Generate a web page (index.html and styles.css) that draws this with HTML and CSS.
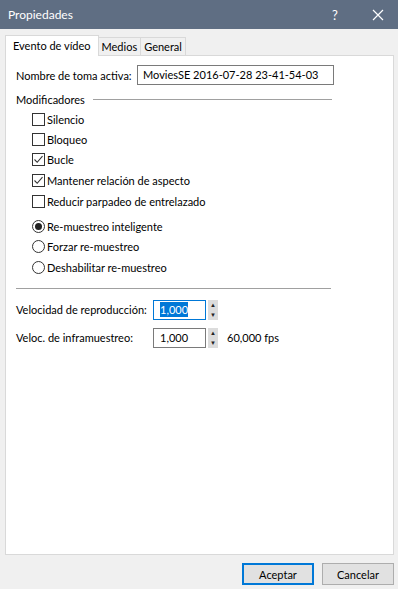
FILE: index.html
```html
<!DOCTYPE html>
<html lang="es">
<head>
  <meta charset="UTF-8">
  <title>Propiedades</title>
  <link rel="stylesheet" href="styles.css">
</head>
<body>
  <div class="titlebar">
    <span class="title">Propiedades</span>
    <span class="help">?</span>
    <span class="close">
      <svg width="12" height="12" viewBox="0 0 12 12"><path d="M1 1L11 11M11 1L1 11" stroke="#fff" stroke-width="1.2"/></svg>
    </span>
  </div>

  <div class="dialog">
    <div class="tabs">
      <div class="tab active">Evento de vídeo</div>
      <div class="tab">Medios</div>
      <div class="tab">General</div>
    </div>

    <div class="panel">
      <div class="row name-row">
        <label>Nombre de toma activa:</label>
        <div class="textbox">MoviesSE 2016-07-28 23-41-54-03</div>
      </div>

      <div class="group-title">
        <span>Modificadores</span>
        <div class="line"></div>
      </div>

      <div class="checks">
        <div class="check"><span class="box"></span>Silencio</div>
        <div class="check"><span class="box"></span>Bloqueo</div>
        <div class="check"><span class="box checked"><svg width="11" height="11" viewBox="0 0 11 11"><path d="M1.5 5.5L4.2 8.3L9.5 2.2" fill="none" stroke="#333" stroke-width="1.1"/></svg></span>Bucle</div>
        <div class="check"><span class="box checked"><svg width="11" height="11" viewBox="0 0 11 11"><path d="M1.5 5.5L4.2 8.3L9.5 2.2" fill="none" stroke="#333" stroke-width="1.1"/></svg></span>Mantener relación de aspecto</div>
        <div class="check"><span class="box"></span>Reducir parpadeo de entrelazado</div>
      </div>

      <div class="radios">
        <div class="radio"><span class="dot on"></span>Re-muestreo inteligente</div>
        <div class="radio"><span class="dot"></span>Forzar re-muestreo</div>
        <div class="radio"><span class="dot"></span>Deshabilitar re-muestreo</div>
      </div>

      <div class="sep"></div>

      <div class="row spin-row">
        <label class="spin-label">Velocidad de reproducción:</label>
        <div class="spinbox focused"><span class="sel">1,000</span></div>
        <div class="arrows"><span>&#9650;</span><span>&#9660;</span></div>
      </div>
      <div class="row spin-row">
        <label class="spin-label">Veloc. de inframuestreo:</label>
        <div class="spinbox">1,000</div>
        <div class="arrows"><span>&#9650;</span><span>&#9660;</span></div>
        <span class="fps">60,000 fps</span>
      </div>
    </div>

    <div class="buttons">
      <button class="btn default">Aceptar</button>
      <button class="btn">Cancelar</button>
    </div>
  </div>
</body>
</html>
```

FILE: styles.css
```css
* {
  margin: 0;
  padding: 0;
  box-sizing: border-box;
}

body {
  width: 398px;
  height: 589px;
  background: #f0f0f0;
  font-family: Lato, "Noto Sans", sans-serif;
  font-size: 11px;
  color: #000;
  overflow: hidden;
  white-space: nowrap;
}

.titlebar {
  height: 29px;
  background: #5f6e83;
  color: #fff;
  display: flex;
  align-items: center;
  padding-left: 8px;
}

.title {
  flex: 1;
  font-size: 12px;
}

.help {
  width: 46px;
  text-align: center;
  font-size: 13px;
}

.close {
  width: 40px;
  display: flex;
  justify-content: center;
}

.dialog {
  padding: 6px 4px 0 5px;
}

.tabs {
  display: flex;
  align-items: flex-end;
  height: 20px;
  position: relative;
  z-index: 1;
}

.tab {
  height: 18px;
  border: 1px solid #d9d9d9;
  border-bottom: none;
  background: #f0f0f0;
  padding: 0 3px;
  line-height: 17px;
  margin-left: -1px;
}

.tab:first-child {
  margin-left: 0;
}

.tab.active {
  height: 21px;
  background: #fff;
  padding: 0 7px;
  line-height: 19px;
  margin-bottom: -1px;
}

.panel {
  height: 500px;
  background: #fff;
  border: 1px solid #d9d9d9;
  padding: 9px 10px 0 10px;
}

.row {
  display: flex;
  align-items: center;
}

.row > * {
  flex: none;
}

.name-row label {
  width: 121px;
}

.textbox {
  width: 197px;
  height: 20px;
  border: 1px solid #7a7a7a;
  padding-left: 5px;
  line-height: 18px;
}

.group-title {
  display: flex;
  align-items: center;
  margin-top: 5px;
  height: 18px;
}

.group-title .line {
  width: 239px;
  height: 1px;
  background: #a0a0a0;
  margin-left: 8px;
}

.checks {
  padding-left: 16px;
  margin-top: 1px;
}

.check, .radio {
  display: flex;
  align-items: center;
  height: 20px;
}

.check:nth-child(4), .check:nth-child(5) {
  margin-top: 1px;
}

.box {
  width: 13px;
  height: 13px;
  border: 1px solid #333;
  background: #fff;
  margin-right: 2px;
  display: flex;
  align-items: center;
  justify-content: center;
}

.radios {
  padding-left: 16px;
  margin-top: 5px;
}

.radio {
  height: 20.5px;
}

.dot {
  width: 13px;
  height: 13px;
  border: 1px solid #333;
  border-radius: 50%;
  margin-right: 2px;
  display: flex;
  align-items: center;
  justify-content: center;
}

.dot.on::after {
  content: "";
  width: 7px;
  height: 7px;
  border-radius: 50%;
  background: #222;
}

.sep {
  width: 315px;
  height: 1px;
  background: #a0a0a0;
  margin-top: 10px;
  margin-bottom: 11px;
}

.spin-row {
  height: 20px;
  margin-bottom: 8px;
}

.spin-label {
  width: 137px;
}

.spinbox {
  width: 53px;
  height: 20px;
  border: 1px solid #7a7a7a;
  padding-left: 6px;
  line-height: 18px;
  background: #fff;
}

.spinbox.focused {
  border-color: #0078d7;
}

.sel {
  background: #0078d7;
  color: #fff;
  padding: 1px 0;
}

.arrows {
  width: 10px;
  height: 20px;
  margin-left: 2px;
  background: #dcdcdc;
  display: flex;
  flex-direction: column;
  align-items: center;
  justify-content: space-between;
  font-size: 6px;
  color: #222;
  padding: 2px 0;
  line-height: 6px;
}

.fps {
  margin-left: 9px;
}

.buttons {
  display: flex;
  justify-content: flex-end;
  gap: 8px;
  margin-top: 8px;
}

.btn {
  width: 72px;
  height: 22px;
  background: #e1e1e1;
  border: 1px solid #adadad;
  font-family: inherit;
  font-size: 11px;
}

.btn.default {
  border: 2px solid #0078d7;
}
```
